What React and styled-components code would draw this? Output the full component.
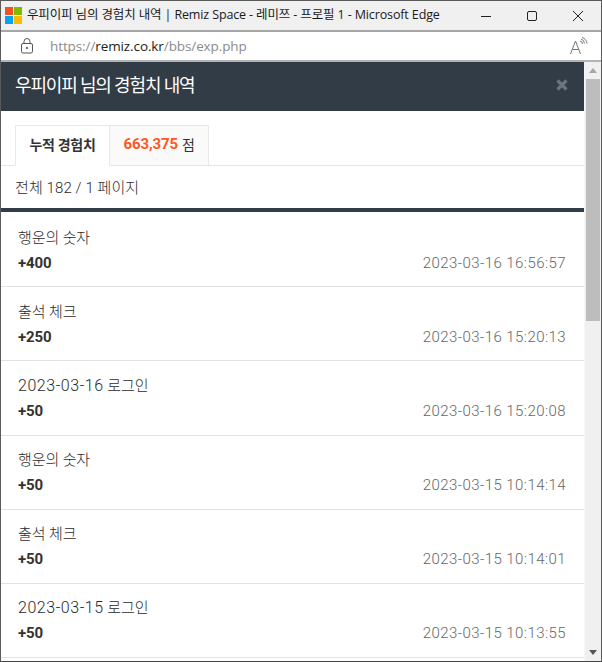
import React from "react";
import styled, { createGlobalStyle } from "styled-components";

const Global = createGlobalStyle`
  html, body { margin: 0; padding: 0; background: #fff; }
  * { box-sizing: border-box; }
`;
const Win = styled.div`
  width: 602px; height: 662px; overflow: hidden; display: flex; flex-direction: column;
  border: 1px solid #5a5a5a; border-bottom: 1px solid #444; background: #fff;
  font-family: Roboto, "Noto Sans CJK KR", sans-serif;
`;
const TitleBar = styled.div`
  height: 29px; flex: none; background: #f0f0f0; display: flex; align-items: center; padding-left: 4px;
`;
const Title = styled.div`
  flex: 1; min-width: 0; margin-left: 5px; font: 12.5px/1 "Open Sans", "Noto Sans CJK KR", sans-serif; letter-spacing: -0.13px; color: #1a1a1a; white-space: nowrap;
`;
const WinButtons = styled.div`
  display: flex; flex: none; width: 121px; justify-content: flex-end; gap: 34px; padding-right: 17px; align-items: center;
`;
const AddressBar = styled.div`
  height: 32px; flex: none; background: #fff; border-top: 2px solid #a6a6a6; border-bottom: 2px solid #b4b4b4;
  display: flex; align-items: center; padding: 0 13px 0 20px;
`;
const Url = styled.div`
  flex: 1; margin-left: 17px; font: 13.5px "Open Sans", sans-serif; color: #8a8a8a; letter-spacing: -0.1px;
  b { font-weight: 400; color: #222; }
`;
const Page = styled.div`
  flex: 1; min-height: 0; display: flex;
`;
const Main = styled.div`
  flex: 1; min-width: 0; overflow: hidden;
`;
const Header = styled.div`
  height: 49px; background: #323c46; color: #fff; display: flex; align-items: center; justify-content: space-between;
  padding: 0 16px 5px 14px; font-size: 18px; letter-spacing: -1.15px; font-weight: 400;
`;
const CloseIcon = styled.svg`
  width: 12px; height: 12px; margin-top: 2px;
`;
const Tabs = styled.div`
  height: 55px; padding: 14px 0 0 14px; display: flex; border-bottom: 1px solid #e5e5e5;
`;
const Tab = styled.div`
  height: 41px; display: flex; align-items: center; justify-content: center; font-size: 14px; letter-spacing: -0.3px;
  padding-bottom: 3px;
  border: 1px solid #e8e8e8; border-left-width: ${p => (p.$active ? "1px" : "0")};
  border-bottom: ${p => (p.$active ? "1px solid #fff" : "1px solid #e5e5e5")};
  background: ${p => (p.$active ? "#fff" : "#fafafa")};
  width: ${p => p.$w}px; color: #333;
  font-weight: ${p => (p.$active ? 700 : 400)};
`;
const Points = styled.b`
  color: #ff5722; font-weight: 700; font-size: 15px; margin-right: 4px; letter-spacing: -0.1px;
`;
const Total = styled.div`
  box-sizing: content-box; height: 40px; padding: 0 0 2px 14px; display: flex; align-items: center; font-size: 15px; color: #2a2a2a;
  letter-spacing: 0.1px; font-weight: 300; border-bottom: 4px solid #323c46;
`;
const List = styled.div`
  display: flex; flex-direction: column; padding-top: 1px;
`;
const Row = styled.div`
  height: 74.2px; flex: none; padding: 14.5px 18px 0 17px; border-bottom: 1px solid #e2e2e2;
`;
const RowName = styled.div`
  font-size: 15px; line-height: 20px; color: #2a2a2a; letter-spacing: -0.1px; font-weight: 300;
`;
const DatePart = styled.span`
  font-size: 16px; letter-spacing: 0.55px;
`;
const RowBottom = styled.div`
  display: flex; justify-content: space-between; align-items: center; margin-top: 5px; line-height: 20px;
`;
const Amount = styled.div`
  font-size: 15px; font-weight: 700; color: #333; letter-spacing: -0.1px;
`;
const Time = styled.div`
  font-size: 15px; font-weight: 300; color: #666; letter-spacing: 0.43px;
`;
const Scrollbar = styled.div`
  width: 17px; flex: none; background: #f0f0f0; display: flex; flex-direction: column; align-items: center;
  border-left: 1px solid #f6f6f6;
`;
const Arrow = styled.div`
  height: 17px; flex: none; display: flex; align-items: center; justify-content: center;
`;
const Thumb = styled.div`
  width: 14px; height: 242px; background: #bdbdbd; flex: none;
`;
const Spacer = styled.div`flex: 1;`;

const rows = [
  ["", "행운의 숫자", "+400", "2023-03-16 16:56:57"],
  ["", "출석 체크", "+250", "2023-03-16 15:20:13"],
  ["2023-03-16", " 로그인", "+50", "2023-03-16 15:20:08"],
  ["", "행운의 숫자", "+50", "2023-03-15 10:14:14"],
  ["", "출석 체크", "+50", "2023-03-15 10:14:01"],
  ["2023-03-15", " 로그인", "+50", "2023-03-15 10:13:55"],
];

export default function App() {
  return (
    <Win>
      <Global />
      <TitleBar>
        <svg width="17" height="17" viewBox="0 0 17 17">
          <rect x="0" y="0" width="8" height="8" fill="#f25022" />
          <rect x="9" y="0" width="8" height="8" fill="#7fba00" />
          <rect x="0" y="9" width="8" height="8" fill="#00a4ef" />
          <rect x="9" y="9" width="8" height="8" fill="#ffb900" />
        </svg>
        <Title>우피이피 님의 경험치 내역 | Remiz Space - 레미쯔 - 프로필 1 - Microsoft Edge</Title>
        <WinButtons>
          <svg width="12" height="12" viewBox="0 0 12 12"><path d="M1 6.5h10" stroke="#222" fill="none" /></svg>
          <svg width="12" height="12" viewBox="0 0 12 12"><rect x="1.5" y="1.5" width="9" height="9" rx="1.5" stroke="#222" fill="none" /></svg>
          <svg width="12" height="12" viewBox="0 0 12 12"><path d="M1 1l10 10M11 1L1 11" stroke="#222" fill="none" /></svg>
        </WinButtons>
      </TitleBar>
      <AddressBar>
        <svg width="12" height="16" viewBox="0 0 12 16" fill="none" stroke="#555">
          <rect x="0.5" y="5.5" width="11" height="9.5" rx="1.5" />
          <path d="M3 5.5V3.5a3 3 0 0 1 6 0v2" />
          <circle cx="6" cy="10" r="0.7" fill="#555" />
        </svg>
        <Url>https://<b>remiz.co.kr</b>/bbs/exp.php</Url>
        <svg width="18" height="18" viewBox="0 0 18 18" fill="none" stroke="#777">
          <path d="M0.5 17L5.5 4l5 13M2.2 12.5h6.6" />
          <path d="M10 4a3 3 0 0 1 2.5 3M11 2a5 5 0 0 1 3.5 4.5M12 0.5a7 7 0 0 1 5 6" />
        </svg>
      </AddressBar>
      <Page>
        <Main>
          <Header>
            <span>우피이피 님의 경험치 내역</span>
            <CloseIcon viewBox="0 0 12 12"><path d="M1.5 1.5l9 9M10.5 1.5l-9 9" stroke="#6c747c" strokeWidth="3.2" /></CloseIcon>
          </Header>
          <Tabs>
            <Tab $active $w={95}>누적 경험치</Tab>
            <Tab $w={99}><Points>663,375</Points> 점</Tab>
          </Tabs>
          <Total>전체 182 / 1 페이지</Total>
          <List>
            {rows.map((r, i) => (
              <Row key={i}>
                <RowName>{r[0] && <DatePart>{r[0]}</DatePart>}{r[1]}</RowName>
                <RowBottom>
                  <Amount>{r[2]}</Amount>
                  <Time>{r[3]}</Time>
                </RowBottom>
              </Row>
            ))}
          </List>
        </Main>
        <Scrollbar>
          <Arrow><svg width="8" height="5" viewBox="0 0 8 5"><path d="M4 0l4 5H0z" fill="#a6a6a6" /></svg></Arrow>
          <Thumb />
          <Spacer />
          <Arrow><svg width="8" height="5" viewBox="0 0 8 5"><path d="M4 5L0 0h8z" fill="#555" /></svg></Arrow>
        </Scrollbar>
      </Page>
    </Win>
  );
}
